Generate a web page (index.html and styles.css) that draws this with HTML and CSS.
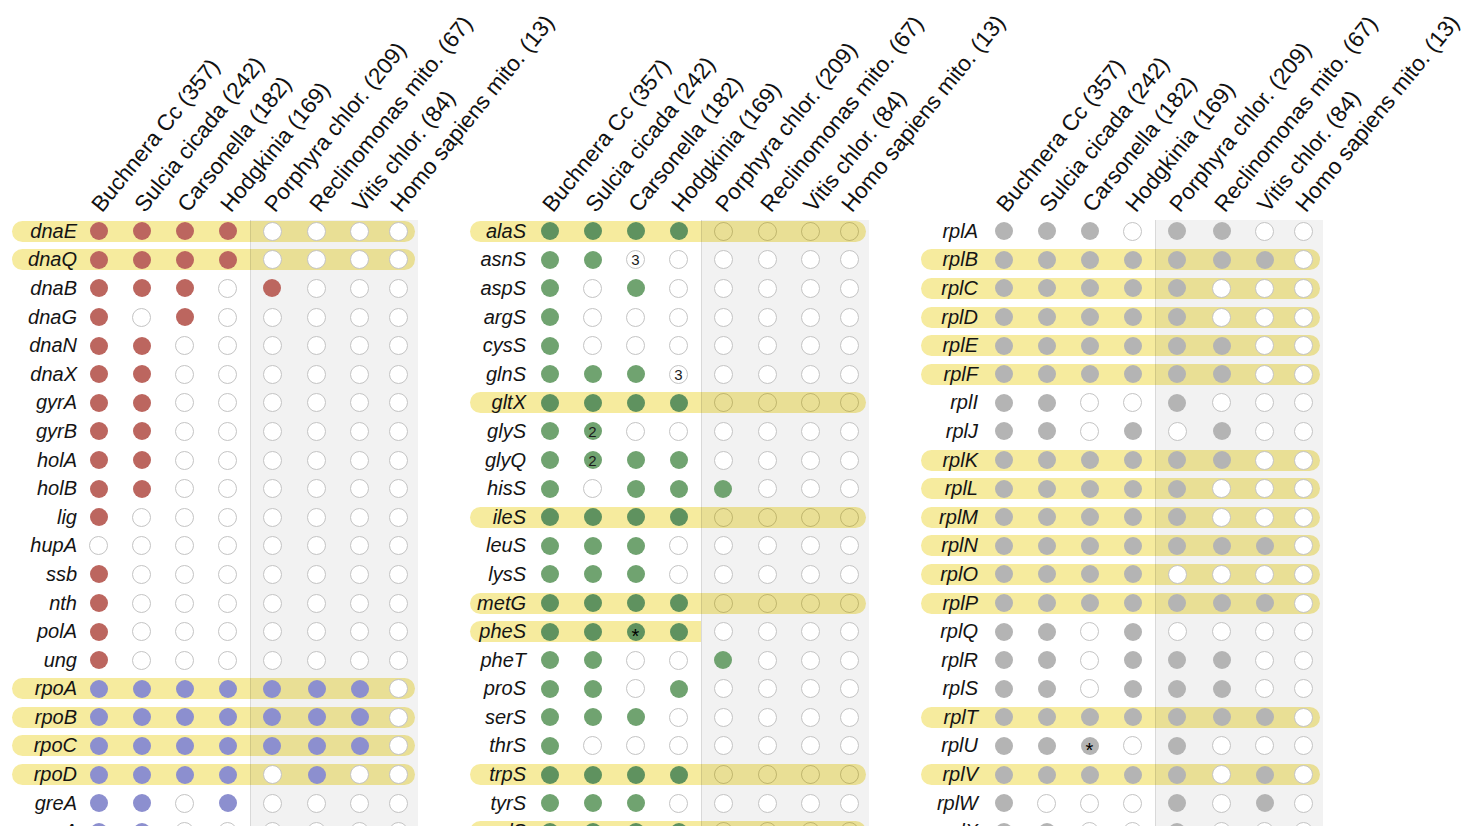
FILE: index.html
```html
<!DOCTYPE html>
<html>
<head>
<meta charset="utf-8">
<link rel="stylesheet" href="styles.css">
</head>
<body>
<div class="figure">

<section class="panel p1">
  <div class="cols head">
    <div></div>
    <div class="col"><span class="lab">Buchnera Cc (357)</span></div>
    <div class="col"><span class="lab">Sulcia cicada (242)</span></div>
    <div class="col"><span class="lab">Carsonella (182)</span></div>
    <div class="col"><span class="lab">Hodgkinia (169)</span></div>
    <div class="col"><span class="lab">Porphyra chlor. (209)</span></div>
    <div class="col"><span class="lab">Reclinomonas mito. (67)</span></div>
    <div class="col"><span class="lab">Vitis chlor. (84)</span></div>
    <div class="col"><span class="lab">Homo sapiens mito. (13)</span></div>
  </div>
  <div class="rows">
    <div class="cols row hl"><span class="g">dnaE</span><span class="c R"></span><span class="c R"></span><span class="c R"></span><span class="c R"></span><span class="c"></span><span class="c"></span><span class="c"></span><span class="c"></span></div>
    <div class="cols row hl"><span class="g">dnaQ</span><span class="c R"></span><span class="c R"></span><span class="c R"></span><span class="c R"></span><span class="c"></span><span class="c"></span><span class="c"></span><span class="c"></span></div>
    <div class="cols row"><span class="g">dnaB</span><span class="c R"></span><span class="c R"></span><span class="c R"></span><span class="c"></span><span class="c R"></span><span class="c"></span><span class="c"></span><span class="c"></span></div>
    <div class="cols row"><span class="g">dnaG</span><span class="c R"></span><span class="c"></span><span class="c R"></span><span class="c"></span><span class="c"></span><span class="c"></span><span class="c"></span><span class="c"></span></div>
    <div class="cols row"><span class="g">dnaN</span><span class="c R"></span><span class="c R"></span><span class="c"></span><span class="c"></span><span class="c"></span><span class="c"></span><span class="c"></span><span class="c"></span></div>
    <div class="cols row"><span class="g">dnaX</span><span class="c R"></span><span class="c R"></span><span class="c"></span><span class="c"></span><span class="c"></span><span class="c"></span><span class="c"></span><span class="c"></span></div>
    <div class="cols row"><span class="g">gyrA</span><span class="c R"></span><span class="c R"></span><span class="c"></span><span class="c"></span><span class="c"></span><span class="c"></span><span class="c"></span><span class="c"></span></div>
    <div class="cols row"><span class="g">gyrB</span><span class="c R"></span><span class="c R"></span><span class="c"></span><span class="c"></span><span class="c"></span><span class="c"></span><span class="c"></span><span class="c"></span></div>
    <div class="cols row"><span class="g">holA</span><span class="c R"></span><span class="c R"></span><span class="c"></span><span class="c"></span><span class="c"></span><span class="c"></span><span class="c"></span><span class="c"></span></div>
    <div class="cols row"><span class="g">holB</span><span class="c R"></span><span class="c R"></span><span class="c"></span><span class="c"></span><span class="c"></span><span class="c"></span><span class="c"></span><span class="c"></span></div>
    <div class="cols row"><span class="g">lig</span><span class="c R"></span><span class="c"></span><span class="c"></span><span class="c"></span><span class="c"></span><span class="c"></span><span class="c"></span><span class="c"></span></div>
    <div class="cols row"><span class="g">hupA</span><span class="c"></span><span class="c"></span><span class="c"></span><span class="c"></span><span class="c"></span><span class="c"></span><span class="c"></span><span class="c"></span></div>
    <div class="cols row"><span class="g">ssb</span><span class="c R"></span><span class="c"></span><span class="c"></span><span class="c"></span><span class="c"></span><span class="c"></span><span class="c"></span><span class="c"></span></div>
    <div class="cols row"><span class="g">nth</span><span class="c R"></span><span class="c"></span><span class="c"></span><span class="c"></span><span class="c"></span><span class="c"></span><span class="c"></span><span class="c"></span></div>
    <div class="cols row"><span class="g">polA</span><span class="c R"></span><span class="c"></span><span class="c"></span><span class="c"></span><span class="c"></span><span class="c"></span><span class="c"></span><span class="c"></span></div>
    <div class="cols row"><span class="g">ung</span><span class="c R"></span><span class="c"></span><span class="c"></span><span class="c"></span><span class="c"></span><span class="c"></span><span class="c"></span><span class="c"></span></div>
    <div class="cols row hl"><span class="g">rpoA</span><span class="c B"></span><span class="c B"></span><span class="c B"></span><span class="c B"></span><span class="c B"></span><span class="c B"></span><span class="c B"></span><span class="c"></span></div>
    <div class="cols row hl"><span class="g">rpoB</span><span class="c B"></span><span class="c B"></span><span class="c B"></span><span class="c B"></span><span class="c B"></span><span class="c B"></span><span class="c B"></span><span class="c"></span></div>
    <div class="cols row hl"><span class="g">rpoC</span><span class="c B"></span><span class="c B"></span><span class="c B"></span><span class="c B"></span><span class="c B"></span><span class="c B"></span><span class="c B"></span><span class="c"></span></div>
    <div class="cols row hl"><span class="g">rpoD</span><span class="c B"></span><span class="c B"></span><span class="c B"></span><span class="c B"></span><span class="c"></span><span class="c B"></span><span class="c"></span><span class="c"></span></div>
    <div class="cols row"><span class="g">greA</span><span class="c B"></span><span class="c B"></span><span class="c"></span><span class="c B"></span><span class="c"></span><span class="c"></span><span class="c"></span><span class="c"></span></div>
    <div class="cols row"><span class="g">nusA</span><span class="c B"></span><span class="c B"></span><span class="c"></span><span class="c"></span><span class="c"></span><span class="c"></span><span class="c"></span><span class="c"></span></div>
  </div>
</section>

<section class="panel p2">
  <div class="cols head">
    <div></div>
    <div class="col"><span class="lab">Buchnera Cc (357)</span></div>
    <div class="col"><span class="lab">Sulcia cicada (242)</span></div>
    <div class="col"><span class="lab">Carsonella (182)</span></div>
    <div class="col"><span class="lab">Hodgkinia (169)</span></div>
    <div class="col"><span class="lab">Porphyra chlor. (209)</span></div>
    <div class="col"><span class="lab">Reclinomonas mito. (67)</span></div>
    <div class="col"><span class="lab">Vitis chlor. (84)</span></div>
    <div class="col"><span class="lab">Homo sapiens mito. (13)</span></div>
  </div>
  <div class="rows">
    <div class="cols row hl"><span class="g">alaS</span><span class="c G"></span><span class="c G"></span><span class="c G"></span><span class="c G"></span><span class="c"></span><span class="c"></span><span class="c"></span><span class="c"></span></div>
    <div class="cols row"><span class="g">asnS</span><span class="c G"></span><span class="c G"></span><span class="c t">3</span><span class="c"></span><span class="c"></span><span class="c"></span><span class="c"></span><span class="c"></span></div>
    <div class="cols row"><span class="g">aspS</span><span class="c G"></span><span class="c"></span><span class="c G"></span><span class="c"></span><span class="c"></span><span class="c"></span><span class="c"></span><span class="c"></span></div>
    <div class="cols row"><span class="g">argS</span><span class="c G"></span><span class="c"></span><span class="c"></span><span class="c"></span><span class="c"></span><span class="c"></span><span class="c"></span><span class="c"></span></div>
    <div class="cols row"><span class="g">cysS</span><span class="c G"></span><span class="c"></span><span class="c"></span><span class="c"></span><span class="c"></span><span class="c"></span><span class="c"></span><span class="c"></span></div>
    <div class="cols row"><span class="g">glnS</span><span class="c G"></span><span class="c G"></span><span class="c G"></span><span class="c t">3</span><span class="c"></span><span class="c"></span><span class="c"></span><span class="c"></span></div>
    <div class="cols row hl"><span class="g">gltX</span><span class="c G"></span><span class="c G"></span><span class="c G"></span><span class="c G"></span><span class="c"></span><span class="c"></span><span class="c"></span><span class="c"></span></div>
    <div class="cols row"><span class="g">glyS</span><span class="c G"></span><span class="c G t">2</span><span class="c"></span><span class="c"></span><span class="c"></span><span class="c"></span><span class="c"></span><span class="c"></span></div>
    <div class="cols row"><span class="g">glyQ</span><span class="c G"></span><span class="c G t">2</span><span class="c G"></span><span class="c G"></span><span class="c"></span><span class="c"></span><span class="c"></span><span class="c"></span></div>
    <div class="cols row"><span class="g">hisS</span><span class="c G"></span><span class="c"></span><span class="c G"></span><span class="c G"></span><span class="c G"></span><span class="c"></span><span class="c"></span><span class="c"></span></div>
    <div class="cols row hl"><span class="g">ileS</span><span class="c G"></span><span class="c G"></span><span class="c G"></span><span class="c G"></span><span class="c"></span><span class="c"></span><span class="c"></span><span class="c"></span></div>
    <div class="cols row"><span class="g">leuS</span><span class="c G"></span><span class="c G"></span><span class="c G"></span><span class="c"></span><span class="c"></span><span class="c"></span><span class="c"></span><span class="c"></span></div>
    <div class="cols row"><span class="g">lysS</span><span class="c G"></span><span class="c G"></span><span class="c G"></span><span class="c"></span><span class="c"></span><span class="c"></span><span class="c"></span><span class="c"></span></div>
    <div class="cols row hl"><span class="g">metG</span><span class="c G"></span><span class="c G"></span><span class="c G"></span><span class="c G"></span><span class="c"></span><span class="c"></span><span class="c"></span><span class="c"></span></div>
    <div class="cols row half"><span class="g">pheS</span><span class="c G"></span><span class="c G"></span><span class="c G t star">*</span><span class="c G"></span><span class="c"></span><span class="c"></span><span class="c"></span><span class="c"></span></div>
    <div class="cols row"><span class="g">pheT</span><span class="c G"></span><span class="c G"></span><span class="c"></span><span class="c"></span><span class="c G"></span><span class="c"></span><span class="c"></span><span class="c"></span></div>
    <div class="cols row"><span class="g">proS</span><span class="c G"></span><span class="c G"></span><span class="c"></span><span class="c G"></span><span class="c"></span><span class="c"></span><span class="c"></span><span class="c"></span></div>
    <div class="cols row"><span class="g">serS</span><span class="c G"></span><span class="c G"></span><span class="c G"></span><span class="c"></span><span class="c"></span><span class="c"></span><span class="c"></span><span class="c"></span></div>
    <div class="cols row"><span class="g">thrS</span><span class="c G"></span><span class="c"></span><span class="c"></span><span class="c"></span><span class="c"></span><span class="c"></span><span class="c"></span><span class="c"></span></div>
    <div class="cols row hl"><span class="g">trpS</span><span class="c G"></span><span class="c G"></span><span class="c G"></span><span class="c G"></span><span class="c"></span><span class="c"></span><span class="c"></span><span class="c"></span></div>
    <div class="cols row"><span class="g">tyrS</span><span class="c G"></span><span class="c G"></span><span class="c G"></span><span class="c"></span><span class="c"></span><span class="c"></span><span class="c"></span><span class="c"></span></div>
    <div class="cols row hl"><span class="g">valS</span><span class="c G"></span><span class="c G"></span><span class="c G"></span><span class="c G"></span><span class="c"></span><span class="c"></span><span class="c"></span><span class="c"></span></div>
  </div>
</section>

<section class="panel p3">
  <div class="cols head">
    <div></div>
    <div class="col"><span class="lab">Buchnera Cc (357)</span></div>
    <div class="col"><span class="lab">Sulcia cicada (242)</span></div>
    <div class="col"><span class="lab">Carsonella (182)</span></div>
    <div class="col"><span class="lab">Hodgkinia (169)</span></div>
    <div class="col"><span class="lab">Porphyra chlor. (209)</span></div>
    <div class="col"><span class="lab">Reclinomonas mito. (67)</span></div>
    <div class="col"><span class="lab">Vitis chlor. (84)</span></div>
    <div class="col"><span class="lab">Homo sapiens mito. (13)</span></div>
  </div>
  <div class="rows">
    <div class="cols row"><span class="g">rplA</span><span class="c K"></span><span class="c K"></span><span class="c K"></span><span class="c"></span><span class="c K"></span><span class="c K"></span><span class="c"></span><span class="c"></span></div>
    <div class="cols row hl"><span class="g">rplB</span><span class="c K"></span><span class="c K"></span><span class="c K"></span><span class="c K"></span><span class="c K"></span><span class="c K"></span><span class="c K"></span><span class="c"></span></div>
    <div class="cols row hl"><span class="g">rplC</span><span class="c K"></span><span class="c K"></span><span class="c K"></span><span class="c K"></span><span class="c K"></span><span class="c"></span><span class="c"></span><span class="c"></span></div>
    <div class="cols row hl"><span class="g">rplD</span><span class="c K"></span><span class="c K"></span><span class="c K"></span><span class="c K"></span><span class="c K"></span><span class="c"></span><span class="c"></span><span class="c"></span></div>
    <div class="cols row hl"><span class="g">rplE</span><span class="c K"></span><span class="c K"></span><span class="c K"></span><span class="c K"></span><span class="c K"></span><span class="c K"></span><span class="c"></span><span class="c"></span></div>
    <div class="cols row hl"><span class="g">rplF</span><span class="c K"></span><span class="c K"></span><span class="c K"></span><span class="c K"></span><span class="c K"></span><span class="c K"></span><span class="c"></span><span class="c"></span></div>
    <div class="cols row"><span class="g">rplI</span><span class="c K"></span><span class="c K"></span><span class="c"></span><span class="c"></span><span class="c K"></span><span class="c"></span><span class="c"></span><span class="c"></span></div>
    <div class="cols row"><span class="g">rplJ</span><span class="c K"></span><span class="c K"></span><span class="c"></span><span class="c K"></span><span class="c"></span><span class="c K"></span><span class="c"></span><span class="c"></span></div>
    <div class="cols row hl"><span class="g">rplK</span><span class="c K"></span><span class="c K"></span><span class="c K"></span><span class="c K"></span><span class="c K"></span><span class="c K"></span><span class="c"></span><span class="c"></span></div>
    <div class="cols row hl"><span class="g">rplL</span><span class="c K"></span><span class="c K"></span><span class="c K"></span><span class="c K"></span><span class="c K"></span><span class="c"></span><span class="c"></span><span class="c"></span></div>
    <div class="cols row hl"><span class="g">rplM</span><span class="c K"></span><span class="c K"></span><span class="c K"></span><span class="c K"></span><span class="c K"></span><span class="c"></span><span class="c"></span><span class="c"></span></div>
    <div class="cols row hl"><span class="g">rplN</span><span class="c K"></span><span class="c K"></span><span class="c K"></span><span class="c K"></span><span class="c K"></span><span class="c K"></span><span class="c K"></span><span class="c"></span></div>
    <div class="cols row hl"><span class="g">rplO</span><span class="c K"></span><span class="c K"></span><span class="c K"></span><span class="c K"></span><span class="c"></span><span class="c"></span><span class="c"></span><span class="c"></span></div>
    <div class="cols row hl"><span class="g">rplP</span><span class="c K"></span><span class="c K"></span><span class="c K"></span><span class="c K"></span><span class="c K"></span><span class="c K"></span><span class="c K"></span><span class="c"></span></div>
    <div class="cols row"><span class="g">rplQ</span><span class="c K"></span><span class="c K"></span><span class="c"></span><span class="c K"></span><span class="c"></span><span class="c"></span><span class="c"></span><span class="c"></span></div>
    <div class="cols row"><span class="g">rplR</span><span class="c K"></span><span class="c K"></span><span class="c"></span><span class="c K"></span><span class="c K"></span><span class="c K"></span><span class="c"></span><span class="c"></span></div>
    <div class="cols row"><span class="g">rplS</span><span class="c K"></span><span class="c K"></span><span class="c"></span><span class="c K"></span><span class="c K"></span><span class="c K"></span><span class="c"></span><span class="c"></span></div>
    <div class="cols row hl"><span class="g">rplT</span><span class="c K"></span><span class="c K"></span><span class="c K"></span><span class="c K"></span><span class="c K"></span><span class="c K"></span><span class="c K"></span><span class="c"></span></div>
    <div class="cols row"><span class="g">rplU</span><span class="c K"></span><span class="c K"></span><span class="c K t star">*</span><span class="c"></span><span class="c K"></span><span class="c"></span><span class="c"></span><span class="c"></span></div>
    <div class="cols row hl"><span class="g">rplV</span><span class="c K"></span><span class="c K"></span><span class="c K"></span><span class="c K"></span><span class="c K"></span><span class="c"></span><span class="c K"></span><span class="c"></span></div>
    <div class="cols row"><span class="g">rplW</span><span class="c K"></span><span class="c"></span><span class="c"></span><span class="c"></span><span class="c K"></span><span class="c"></span><span class="c K"></span><span class="c"></span></div>
    <div class="cols row"><span class="g">rplX</span><span class="c K"></span><span class="c K"></span><span class="c"></span><span class="c"></span><span class="c K"></span><span class="c"></span><span class="c"></span><span class="c"></span></div>
  </div>
</section>

</div>
</body>
</html>
```

FILE: styles.css
```css
html, body {
  margin: 0;
  height: 100%;
  overflow: hidden;
  background: #ffffff;
}

body {
  font-family: "Liberation Sans", Arial, Helvetica, sans-serif;
  color: #161616;
}

.figure {
  display: flex;
  gap: 55px;
  padding-left: 12px;
}

.panel {
  --lw: 65px;
  --lp: 0px;
  --yel: #f6eb9e;
  display: flex;
  flex-direction: column;
}

.p2 { --lw: 58px; --lp: 2px; }
.p3 { --lw: 61px; --lp: 4px; }

.cols {
  display: grid;
  grid-template-columns: var(--lw) 43px 43px 43px 43px 46px 43px 43px 34px;
}

/* rotated column headers */
.head {
  height: 216px;
  margin-bottom: 1px;
}

.head .col {
  display: flex;
  justify-content: center;
  align-items: flex-end;
}

.head .lab {
  flex: none;
  width: 0;
  height: 22px;
  font-size: 22.5px;
  line-height: 22px;
  white-space: nowrap;
  color: #111;
  transform-origin: 0 100%;
  transform: translateX(6px) rotate(-51deg);
}

/* gene rows */
.rows {
  position: relative;
  display: flex;
  flex-direction: column;
  gap: 7.6px;
  padding-top: 3.8px;
}

.rows::after {
  content: "";
  position: absolute;
  left: calc(var(--lw) + 173px);
  right: -3px;
  top: 3px;
  bottom: -60px;
  background: rgba(0, 0, 0, 0.05);
  border-left: 1px solid rgba(0, 0, 0, 0.1);
  pointer-events: none;
  z-index: 1;
}

.row {
  height: 21px;
  align-items: center;
  justify-items: center;
  border-radius: 10.5px;
}

.row.hl {
  background: var(--yel);
}

.row.half {
  background: linear-gradient(to right, var(--yel) calc(var(--lw) + 173px), transparent 0);
}

.g {
  justify-self: end;
  padding-right: var(--lp);
  font-style: italic;
  font-size: 20px;
  line-height: 21px;
  color: #141414;
}

/* presence circles */
.c {
  position: relative;
  z-index: 2;
  box-sizing: border-box;
  width: 19px;
  height: 19px;
  border-radius: 50%;
  border: 1.5px solid #c4c4c4;
  background: #ffffff;
}

.c.R, .c.B, .c.G, .c.K {
  width: 18px;
  height: 18px;
  border: none;
}

.c.R { background: #bc665f; }
.c.B { background: #8c8fcf; }
.c.G { background: #70a370; }
.c.K { background: #b4b4b4; }

.p2 .hl .G, .p2 .half .G { background: #5f925f; }

.p2 .hl .c:not(.G) {
  background: transparent;
  border-color: rgba(95, 85, 20, 0.3);
}

.c.t {
  display: flex;
  align-items: center;
  justify-content: center;
  font-size: 15px;
  line-height: 1;
  color: #1c1c1c;
}

.c.star {
  font-size: 20px;
  padding-top: 9px;
  color: #000;
}
```
